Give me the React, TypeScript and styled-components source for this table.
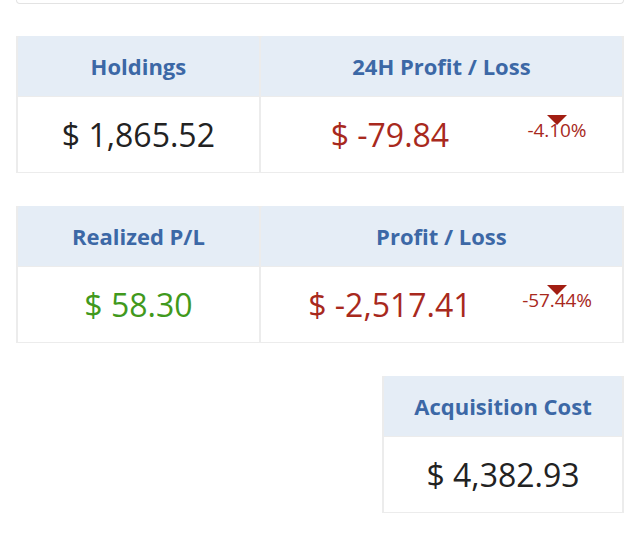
import React from "react";
import styled, { createGlobalStyle } from "styled-components";

const Global = createGlobalStyle`
  html, body { margin: 0; padding: 0; background: #ffffff; }
  body { font-family: "Open Sans", "Noto Sans", sans-serif; }
`;

const Page = styled.div`
  padding: 0 16px;
  display: flex;
  flex-direction: column;
  gap: 32px;
`;

const TopCard = styled.div`
  height: 3px;
  border: 1px solid #e3e3e3;
  border-top: none;
  border-radius: 0 0 8px 8px;
  background: #fff;
`;

const Stack = styled.div`
  display: flex;
  flex-direction: column;
  gap: 33px;
`;

const Table = styled.div<{ $cols: string; $width?: string }>`
  display: grid;
  grid-template-columns: ${(p) => p.$cols};
  grid-template-rows: 60px 75px;
  column-gap: 2px;
  row-gap: 1px;
  padding: 0 2px 1px 2px;
  background: #ececec;
  width: ${(p) => p.$width ?? "auto"};
  align-self: ${(p) => (p.$width ? "flex-end" : "stretch")};
  box-sizing: border-box;
`;

const Head = styled.div`
  background: #e5edf6;
  color: #3c68a6;
  font-weight: 700;
  font-size: 22px;
  display: flex;
  align-items: center;
  justify-content: center;
  border-radius: 3px 3px 0 0;
`;

const Cell = styled.div<{ $split?: boolean }>`
  background: #fff;
  display: grid;
  grid-template-columns: ${(p) => (p.$split ? "1fr 76px" : "1fr")};
  padding-right: ${(p) => (p.$split ? "27px" : "0")};
  align-items: center;
`;

const Value = styled.div<{ $tone: "neutral" | "loss" | "gain" }>`
  font-size: 32px;
  text-align: center;
  color: ${(p) =>
    p.$tone === "loss" ? "#a8291d" : p.$tone === "gain" ? "#41991c" : "#222222"};
`;

const Change = styled.div`
  display: flex;
  flex-direction: column;
  align-items: center;
  margin-top: -13px;
`;

const Arrow = styled.div`
  width: 0;
  height: 0;
  border-left: 10px solid transparent;
  border-right: 10px solid transparent;
  border-top: 10px solid #a21e12;
  margin-bottom: -6px;
  position: relative;
  z-index: 1;
`;

const Percent = styled.div`
  font-size: 19px;
  color: #a8291d;
  letter-spacing: -0.1px;
  line-height: 22px;
  white-space: nowrap;
`;

type Tone = "neutral" | "loss" | "gain";

function ChangeBadge({ pct }: { pct: string }) {
  return (
    <Change>
      <Arrow />
      <Percent>{pct}</Percent>
    </Change>
  );
}

export default function App() {
  const rows: { a: [string, string, Tone]; b: [string, string, string] }[] = [
    { a: ["Holdings", "$ 1,865.52", "neutral"], b: ["24H Profit / Loss", "$ -79.84", "-4.10%"] },
    { a: ["Realized P/L", "$ 58.30", "gain"], b: ["Profit / Loss", "$ -2,517.41", "-57.44%"] },
  ];
  return (
    <>
      <Global />
      <Page>
        <TopCard />
        <Stack>
          {rows.map((r) => (
            <Table key={r.a[0]} $cols="40fr 60fr">
              <Head>{r.a[0]}</Head>
              <Head>{r.b[0]}</Head>
              <Cell>
                <Value $tone={r.a[2]}>{r.a[1]}</Value>
              </Cell>
              <Cell $split>
                <Value $tone="loss">{r.b[1]}</Value>
                <ChangeBadge pct={r.b[2]} />
              </Cell>
            </Table>
          ))}
          <Table $cols="1fr" $width="242px">
            <Head>Acquisition Cost</Head>
            <Cell>
              <Value $tone="neutral">$ 4,382.93</Value>
            </Cell>
          </Table>
        </Stack>
      </Page>
    </>
  );
}
